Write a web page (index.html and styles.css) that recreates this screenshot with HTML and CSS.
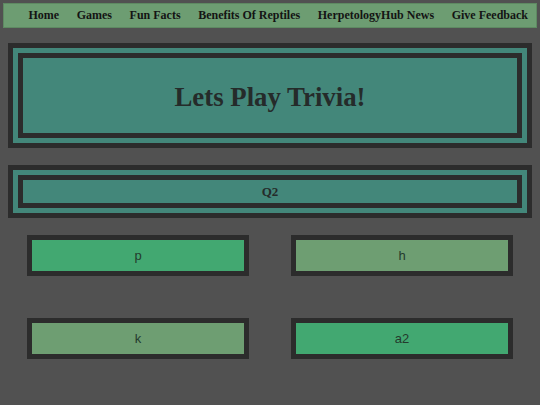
FILE: index.html
```html
<!DOCTYPE html>
<html>
<head>
<meta charset="utf-8">
<link rel="stylesheet" href="styles.css">
</head>
<body>
<nav class="nav">
  <a class="nav-link">Home</a>
  <a class="nav-link">Games</a>
  <a class="nav-link">Fun Facts</a>
  <a class="nav-link">Benefits Of Reptiles</a>
  <a class="nav-link">HerpetologyHub News</a>
  <a class="nav-link">Give Feedback</a>
</nav>
<main class="main">
  <section class="frame title-frame">
    <div class="frame-inner title-inner">
      <h1 class="title">Lets Play Trivia!</h1>
    </div>
  </section>
  <section class="frame q-frame">
    <div class="frame-inner q-inner">
      <h2 class="question">Q2</h2>
    </div>
  </section>
  <div class="answers">
    <button class="answer bright">p</button>
    <button class="answer muted">h</button>
    <button class="answer muted">k</button>
    <button class="answer bright">a2</button>
  </div>
</main>
</body>
</html>
```
FILE: styles.css
```css
html, body {
  margin: 0;
  padding: 0;
  background: #515151;
}
body {
  width: 540px;
  height: 405px;
  overflow: hidden;
}
.nav {
  margin: 3px 3px 0 3px;
  height: 25px;
  box-sizing: border-box;
  background: #6d9d72;
  border: 1px solid #5e8a62;
  display: flex;
  align-items: center;
  justify-content: flex-end;
  gap: 17.6px;
  padding-right: 8px;
  font-family: "Liberation Serif", "Times New Roman", serif;
  font-weight: bold;
  font-size: 12px;
  color: #111;
}
.nav-link {
  color: #141414;
  text-decoration: none;
  white-space: nowrap;
}
.main {
  padding: 0 8px;
}
.frame {
  border: 5px solid #2c2c2c;
  padding: 5px;
  background: #43877a;
}
.frame-inner {
  border: 5px solid #2c2c2c;
  background: #43877a;
  display: flex;
  align-items: center;
  justify-content: center;
}
.title-frame {
  margin-top: 15px;
}
.title-inner {
  height: 75px;
  box-sizing: content-box;
}
.title {
  margin: 3px 0 0 0;
  font-family: "Liberation Serif", "Times New Roman", serif;
  font-weight: bold;
  font-size: 26.8px;
  color: #252b2a;
}
.q-frame {
  margin-top: 17px;
}
.q-inner {
  height: 23px;
}
.question {
  margin: 1px 0 0 0;
  font-family: "Liberation Serif", "Times New Roman", serif;
  font-weight: bold;
  font-size: 13px;
  color: #252b2a;
}
.answers {
  margin-top: 17px;
  display: grid;
  grid-template-columns: 222px 222px;
  column-gap: 42px;
  row-gap: 42px;
  justify-content: center;
}
.answer {
  box-sizing: border-box;
  height: 41px;
  border: 5px solid #2c2c2c;
  margin: 0;
  padding: 0;
  font-family: "Liberation Sans", Arial, sans-serif;
  font-size: 13px;
  color: #243a2d;
  display: flex;
  align-items: center;
  justify-content: center;
}
.bright {
  background: #42a871;
}
.muted {
  background: #6e9e72;
}
```
